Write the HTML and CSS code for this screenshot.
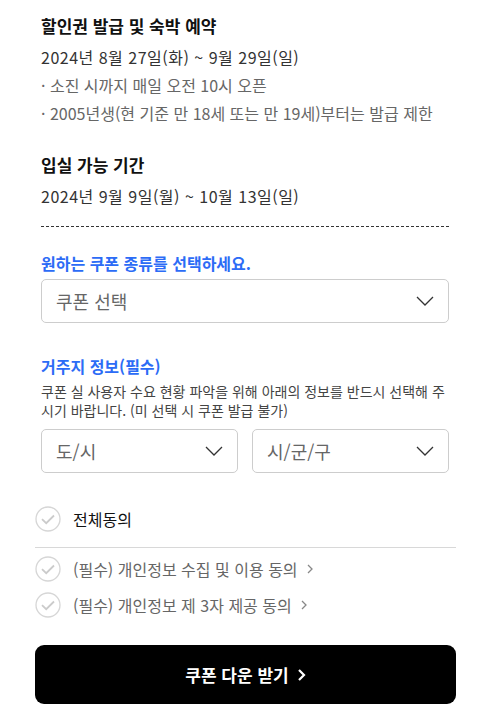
FILE: index.html
```html
<!DOCTYPE html>
<html lang="ko">
<head>
<meta charset="utf-8">
<link rel="stylesheet" href="styles.css">
</head>
<body>
<div class="page">
  <div class="info">
    <section class="block">
      <h2 class="title">할인권 발급 및 숙박 예약</h2>
      <p class="date">2024년 8월 27일(화) ~ 9월 29일(일)</p>
      <p class="note">· 소진 시까지 매일 오전 10시 오픈</p>
      <p class="note">· 2005년생(현 기준 만 18세 또는 만 19세)부터는 발급 제한</p>
    </section>
    <section class="block block-2">
      <h2 class="title">입실 가능 기간</h2>
      <p class="date">2024년 9월 9일(월) ~ 10월 13일(일)</p>
    </section>
    <hr class="dashed">
    <section class="field">
      <h3 class="label">원하는 쿠폰 종류를 선택하세요.</h3>
      <div class="select">
        <span class="ph">쿠폰 선택</span>
        <svg class="chev" width="18" height="10" viewBox="0 0 18 10"><path d="M1 1 L9 9 L17 1" fill="none" stroke="#333" stroke-width="1.3"/></svg>
      </div>
    </section>
    <section class="field field-2">
      <h3 class="label">거주지 정보(필수)</h3>
      <p class="desc">쿠폰 실 사용자 수요 현황 파악을 위해 아래의 정보를 반드시 선택해 주시기 바랍니다. (미 선택 시 쿠폰 발급 불가)</p>
      <div class="row">
        <div class="select">
          <span class="ph">도/시</span>
          <svg class="chev" width="18" height="10" viewBox="0 0 18 10"><path d="M1 1 L9 9 L17 1" fill="none" stroke="#333" stroke-width="1.3"/></svg>
        </div>
        <div class="select">
          <span class="ph">시/군/구</span>
          <svg class="chev" width="18" height="10" viewBox="0 0 18 10"><path d="M1 1 L9 9 L17 1" fill="none" stroke="#333" stroke-width="1.3"/></svg>
        </div>
      </div>
    </section>
  </div>
  <div class="agree">
    <div class="check all">
      <svg class="circle" width="26" height="26" viewBox="0 0 26 26"><circle cx="13" cy="13" r="12" fill="none" stroke="#d6d6d6" stroke-width="1.3"/><path d="M7 13.2 L11.2 17.2 L19 9.5" fill="none" stroke="#cbcbcb" stroke-width="1.8"/></svg>
      <span class="all-text">전체동의</span>
    </div>
    <div class="check first">
      <svg class="circle" width="26" height="26" viewBox="0 0 26 26"><circle cx="13" cy="13" r="12" fill="none" stroke="#d6d6d6" stroke-width="1.3"/><path d="M7 13.2 L11.2 17.2 L19 9.5" fill="none" stroke="#cbcbcb" stroke-width="1.8"/></svg>
      <span class="item-text">(필수) 개인정보 수집 및 이용 동의</span>
      <svg class="arrow" width="6" height="10" viewBox="0 0 6 10"><path d="M1 1 L5 5 L1 9" fill="none" stroke="#888" stroke-width="1.3"/></svg>
    </div>
    <div class="check">
      <svg class="circle" width="26" height="26" viewBox="0 0 26 26"><circle cx="13" cy="13" r="12" fill="none" stroke="#d6d6d6" stroke-width="1.3"/><path d="M7 13.2 L11.2 17.2 L19 9.5" fill="none" stroke="#cbcbcb" stroke-width="1.8"/></svg>
      <span class="item-text">(필수) 개인정보 제 3자 제공 동의</span>
      <svg class="arrow" width="6" height="10" viewBox="0 0 6 10"><path d="M1 1 L5 5 L1 9" fill="none" stroke="#888" stroke-width="1.3"/></svg>
    </div>
  </div>
  <button class="btn">쿠폰 다운 받기 <svg width="9" height="14" viewBox="0 0 9 14"><path d="M2 2 L7 7 L2 12" fill="none" stroke="#fff" stroke-width="2.2"/></svg></button>
</div>
</body>
</html>
```
FILE: styles.css
```css
* { box-sizing: border-box; }
html, body { margin: 0; padding: 0; background: #fff; }
body {
  font-family: "Noto Sans CJK KR", "Noto Sans", sans-serif;
  color: #222;
}
.page {
  padding: 11px 40px 18px 35px;
}
.info {
  padding: 0 7px 0 6px;
}
.block { margin: 0; }
.title {
  margin: 0 0 2px;
  font-size: 17px;
  font-weight: 700;
  line-height: 30px;
  color: #111;
}
.date {
  margin: 0;
  font-size: 16px;
  line-height: 28px;
  letter-spacing: 0.5px;
  color: #333;
}
.note {
  margin: 0;
  font-size: 16px;
  line-height: 28px;
  color: #666;
}
.block-2 { margin-top: 23px; }
.dashed {
  margin: 16px 0 0;
  border: 0;
  border-top: 1px dashed #333;
  height: 0;
}
.field { margin-top: 23px; }
.field-2 { margin-top: 30px; }
.label {
  margin: 0 0 3px;
  font-size: 16px;
  font-weight: 700;
  line-height: 26px;
  color: #2c6cf6;
}
.select {
  height: 44px;
  border: 1px solid #cdcdcd;
  border-radius: 5px;
  display: flex;
  align-items: center;
  justify-content: space-between;
  padding: 0 14px 0 14px;
}
.ph {
  font-size: 18px;
  color: #666;
}
.chev { display: block; }
.desc {
  margin: 0 0 9px;
  font-size: 14px;
  line-height: 19px;
  color: #444;
}
.row {
  display: grid;
  grid-template-columns: 1fr 1fr;
  gap: 14px;
}
.agree {
  margin-top: 33px;
}
.check {
  display: flex;
  align-items: center;
  height: 36px;
  gap: 12px;
}
.circle { display: block; flex: none; }
.all {
  height: 26px;
  margin-bottom: 15px;
}
.all-text {
  font-size: 16px;
  color: #111;
}
.check.first {
  border-top: 1px solid #d8d8d8;
  padding-top: 3px;
  height: 40px;
}
.item-text {
  font-size: 16px;
  color: #666;
}
.arrow {
  display: block;
  margin-left: -3px;
}
.btn {
  display: flex;
  align-items: center;
  justify-content: center;
  gap: 8px;
  width: 100%;
  margin-top: 22px;
  height: 59px;
  border: 0;
  border-radius: 9px;
  background: #000;
  color: #fff;
  font-family: inherit;
  font-size: 17px;
  font-weight: 700;
}
```
